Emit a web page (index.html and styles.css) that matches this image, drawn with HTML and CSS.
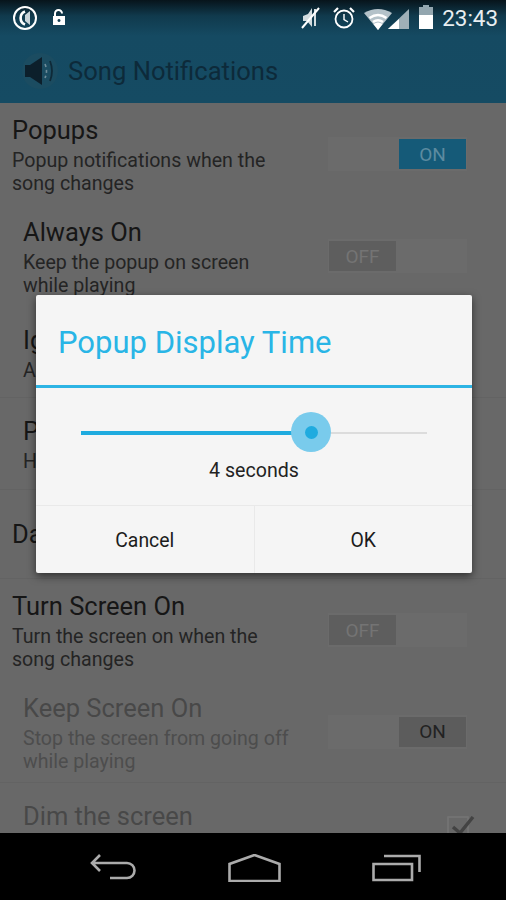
FILE: index.html
```html
<!DOCTYPE html>
<html lang="en">
<head>
<meta charset="utf-8">
<title>Song Notifications</title>
<link rel="stylesheet" href="styles.css">
</head>
<body>
<div class="phone">
  <header class="top">
    <div class="status">
      <div class="status-left">
        <svg class="ic-app" width="28" height="28" viewBox="0 0 28 28"><circle cx="13" cy="14" r="11" fill="none" stroke="#fff" stroke-width="2"/><path d="M18 7 v14 L13 17 V11z" fill="#c9d4d9"/><path d="M13 7.5 A7 7 0 0 0 13 20.5" fill="none" stroke="#fff" stroke-width="2.6"/></svg>
        <svg class="ic-lock" width="16" height="18" viewBox="0 0 16 18"><path d="M4 7 V4.5 a3.5 3.5 0 0 1 7 0" fill="none" stroke="#fff" stroke-width="2"/><path fill-rule="evenodd" d="M2 7 h12 v9 H2z M8 10 a1.5 1.5 0 1 0 .01 0z" fill="#fff"/></svg>
      </div>
      <div class="status-right">
        <svg class="ic-mute" width="20" height="24" viewBox="0 0 20 24"><path d="M11 2 L7 8 L2 10 v5 h4 l5 6 z" fill="#d3dcdf"/><path d="M14 3 V20" stroke="#d3dcdf" stroke-width="2"/><path d="M1 22 L18 2" stroke="#fff" stroke-width="2"/></svg>
        <svg width="24" height="24" viewBox="0 0 24 24"><circle cx="12" cy="13" r="8.5" fill="none" stroke="#fff" stroke-width="1.8"/><path d="M12 8 v5.5 l4 2.5" fill="none" stroke="#fff" stroke-width="1.4"/><path d="M2 6 L6 2 M22 6 L18 2" stroke="#fff" stroke-width="2.2"/></svg>
        <span class="signal-group">
          <svg width="46" height="24" viewBox="0 0 46 24"><path d="M0 7 Q14 -1 28 7 L14 24z" fill="#b4c2c9"/><path d="M5.5 12 Q14 6 22.5 12 M9 16 Q14 12.5 19 16" fill="none" stroke="#fff" stroke-width="2.4"/><path d="M14 24 L9.5 18 Q14 15 18.5 18z" fill="#fff"/><path d="M24 23 L45 3 V23z" fill="#9fb0b8"/><path d="M24 23 L35 13 V23z" fill="#fff"/></svg>
        </span>
        <svg width="16" height="26" viewBox="0 0 16 26"><path d="M5 0 h6 v2 h4 v9 H1 V2 h4z" fill="#93a6af"/><rect x="1" y="10" width="14" height="14" fill="#fff"/></svg>
        <span class="clock">23:43</span>
      </div>
    </div>
    <div class="actionbar">
      <svg class="app-icon" width="36" height="40" viewBox="0 0 36 40"><circle cx="18" cy="20" r="18" fill="#1b4c61"/><path d="M3 14 h5 L20 6 V34 L8 26 H3z" fill="#0c1f2b"/><path d="M23 13 Q26 20 23 27" fill="none" stroke="#6f8c99" stroke-width="1.6" stroke-dasharray="3 3"/><path d="M28 10 Q32 20 28 30" fill="none" stroke="#0f2a38" stroke-width="1.8"/></svg>
      <h1 class="app-title">Song Notifications</h1>
    </div>
  </header>

  <main class="list">
    <section class="row">
      <div class="row-text">
        <div class="t">Popups</div>
        <div class="s">Popup notifications when the<br>song changes</div>
      </div>
      <div class="toggle"><span class="knob knob-on blue">ON</span></div>
    </section>
    <section class="row sub">
      <div class="row-text">
        <div class="t">Always On</div>
        <div class="s">Keep the popup on screen<br>while playing</div>
      </div>
      <div class="toggle"><span class="knob off">OFF</span></div>
    </section>
    <section class="row sub row-short line">
      <div class="row-text">
        <div class="t">Ig</div>
        <div class="s">A</div>
      </div>
    </section>
    <section class="row sub row-short row-tall line">
      <div class="row-text">
        <div class="t">P</div>
        <div class="s">H</div>
      </div>
    </section>
    <section class="row row-single line">
      <div class="t">Da</div>
    </section>
    <section class="row">
      <div class="row-text">
        <div class="t">Turn Screen On</div>
        <div class="s">Turn the screen on when the<br>song changes</div>
      </div>
      <div class="toggle"><span class="knob off">OFF</span></div>
    </section>
    <section class="row sub dim line">
      <div class="row-text">
        <div class="t">Keep Screen On</div>
        <div class="s">Stop the screen from going off<br>while playing</div>
      </div>
      <div class="toggle"><span class="knob knob-on grey">ON</span></div>
    </section>
    <section class="row sub dim row-last">
      <div class="t">Dim the screen</div>
      <svg class="check" width="28" height="26" viewBox="0 0 28 26"><rect x="1" y="1" width="20" height="24" fill="none" stroke="#757575" stroke-width="1.5"/><path d="M6 11 L13 17 L26 1" fill="none" stroke="#434343" stroke-width="3.4"/></svg>
    </section>
  </main>

  <nav class="nav">
    <svg width="46" height="28" viewBox="0 0 46 28"><path d="M10 1 L2 9 L10 17 M2 9 H37 A7.5 7.5 0 0 1 37 24 H20" fill="none" stroke="#ababab" stroke-width="2.6"/></svg>
    <svg width="53" height="28" viewBox="0 0 53 28"><path d="M1.5 27 V10 L26.5 1 L51.5 10 V27z" fill="none" stroke="#ababab" stroke-width="2.6"/></svg>
    <svg width="49" height="28" viewBox="0 0 49 28"><path d="M1.5 10 H40 V26 H1.5z" fill="none" stroke="#ababab" stroke-width="2.6"/><path d="M12 2 H47.5 V18" fill="none" stroke="#ababab" stroke-width="2.6"/></svg>
  </nav>

  <div class="dialog">
    <h2 class="d-title">Popup Display Time</h2>
    <div class="d-body">
      <div class="slider">
        <div class="fill"></div>
        <div class="thumb"><span class="dot"></span></div>
      </div>
      <div class="value">4 seconds</div>
    </div>
    <div class="d-actions">
      <button class="d-btn">Cancel</button>
      <button class="d-btn d-btn-ok">OK</button>
    </div>
  </div>
</div>
</body>
</html>
```
FILE: styles.css
```css
* { box-sizing: border-box; }
html, body { margin: 0; padding: 0; }
body { font-family: Roboto, "Liberation Sans", sans-serif; background: #000; }
.phone { position: relative; width: 506px; height: 900px; overflow: hidden; display: flex; flex-direction: column; background: #686868; }

.top { height: 103px; flex: none; background: linear-gradient(#07141b 0, #103a4d 16px, #154a62 36px, #154b63 100%); }
.status { height: 36px; display: flex; justify-content: space-between; align-items: center; padding: 0 8px 0 12px; }
.status-left { display: flex; align-items: center; gap: 11px; }
.status-right { display: flex; align-items: center; gap: 8px; }
.ic-mute { margin-right: 3px; }
.signal-group { display: flex; }
.clock { color: #e8eef1; font-size: 22.4px; }
.actionbar { height: 67px; display: flex; align-items: center; padding: 2px 0 0 22px; gap: 10px; }
.app-title { margin: 0; font-size: 25.6px; font-weight: 400; color: #0d2a3a; }

.list { flex: 1; min-height: 0; overflow: hidden; display: flex; flex-direction: column; color: #161616; }
.row { flex: none; height: 102px; display: flex; justify-content: space-between; align-items: center; padding: 0 39px 0 12px; }
.row.sub { padding-left: 23px; }
.row-text { flex: 1; padding-top: 2px; }
.t { font-size: 25.5px; line-height: 30px; }
.s { font-size: 19.6px; line-height: 23px; margin-top: 4px; color: #242424; }
.toggle { width: 139px; height: 34px; background: #6b6b6b; display: flex; padding: 2px 1px; }
.knob { width: 67px; height: 30px; display: flex; align-items: center; justify-content: center; font-size: 19px; }
.knob-on { margin-left: auto; }
.blue { background: #155a78; color: #5d8ba0; }
.grey { background: #5c5c5c; color: #222; }
.off { background: #5e5e5e; color: #747474; }
.line { border-bottom: 1px solid #636363; }
.row.row-short { height: 91px; align-items: flex-start; padding-top: 16px; }
.row.row-tall { height: 92px; }
.row.row-single { height: 89px; }
.dim { color: #484848; }
.dim .s { color: #4d4d4d; }
.row.row-last { height: 51px; align-items: flex-start; padding-top: 18px; padding-right: 31px; }
.check { margin-top: 15px; flex: none; }

.nav { height: 67px; flex: none; background: #000; display: flex; align-items: flex-start; justify-content: space-between; padding: 21px 85px 0 90px; }

.dialog { position: absolute; left: 36px; top: 295px; width: 436px; height: 278px; background: #f5f5f5; border-radius: 2px; box-shadow: 0 3px 8px rgba(0,0,0,.55); display: flex; flex-direction: column; }
.d-title { margin: 0; height: 93px; border-bottom: 3px solid #2db4e4; font-size: 31px; font-weight: 400; color: #29b5e6; padding: 4px 0 0 22px; display: flex; align-items: center; }
.d-body { height: 118px; border-bottom: 1px solid #e9e9e9; padding: 0 45px; display: flex; flex-direction: column; align-items: stretch; }
.slider { position: relative; height: 2px; margin-top: 44px; background: #dcdcdc; flex: none; }
.fill { width: 231px; height: 4px; margin-top: -1px; background: #1fabdf; }
.thumb { position: absolute; left: 210px; top: -20px; width: 40px; height: 40px; border-radius: 50%; background: #79cbec; display: flex; align-items: center; justify-content: center; }
.dot { width: 13px; height: 13px; border-radius: 50%; background: #1fabdf; }
.value { margin-top: 25px; text-align: center; font-size: 19.6px; line-height: 24px; color: #222; }
.d-actions { flex: 1; display: flex; }
.d-btn { flex: 1; background: none; border: 0; font: inherit; font-size: 19.4px; color: #1c1c1c; padding: 2px 0 0; }
.d-btn-ok { border-left: 1px solid #e9e9e9; }
```
